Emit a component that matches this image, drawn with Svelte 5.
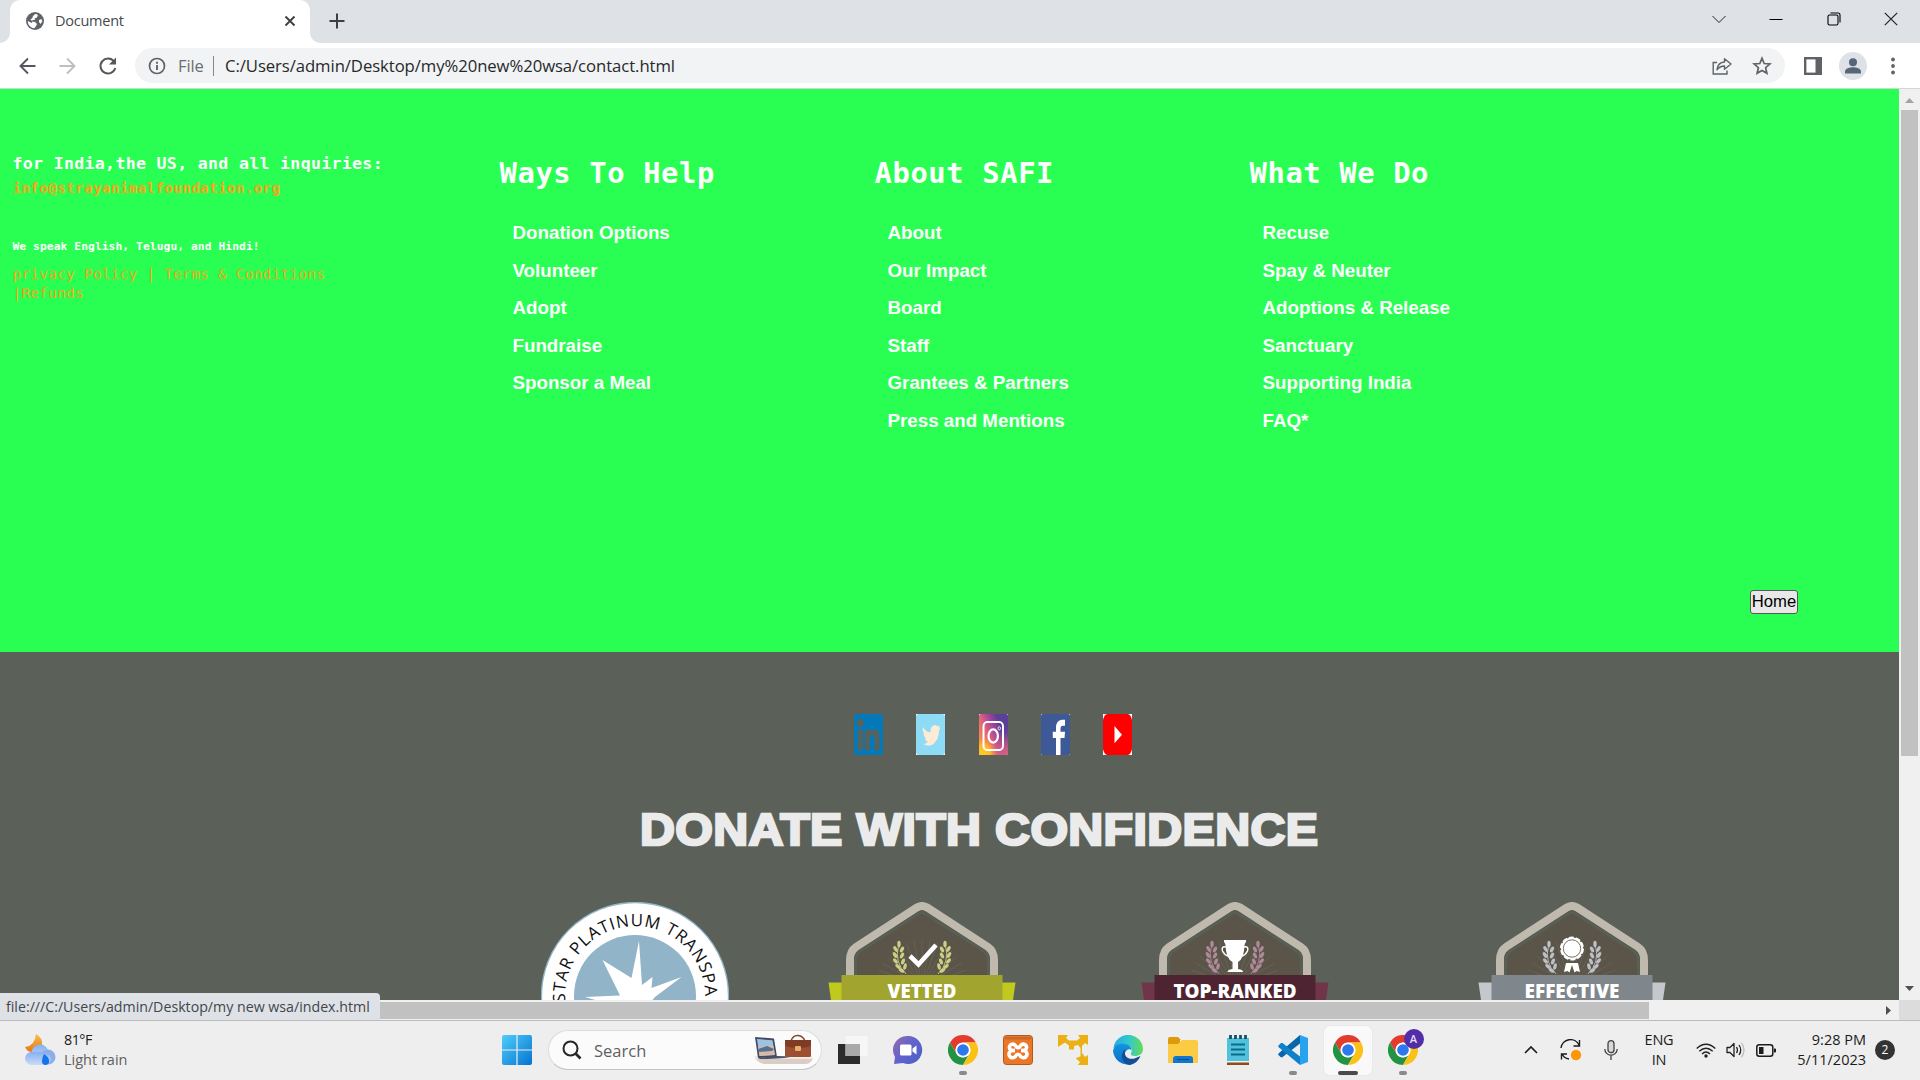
<script>
  const columns = [
    { title: 'Ways To Help', items: ['Donation Options', 'Volunteer', 'Adopt', 'Fundraise', 'Sponsor a Meal'] },
    { title: 'About SAFI', items: ['About', 'Our Impact', 'Board', 'Staff', 'Grantees & Partners', 'Press and Mentions'] },
    { title: 'What We Do', items: ['Recuse', 'Spay & Neuter', 'Adoptions & Release', 'Sanctuary', 'Supporting India', 'FAQ*'] },
  ];

  const badges = [
    { label: 'VETTED', kind: 'check', band: '#a1a42e', tail: '#bfc91e', leaf: '#c9cf83', width: 69 },
    { label: 'TOP-RANKED', kind: 'cup', band: '#4e2432', tail: '#713549', leaf: '#b08a9a', width: 123 },
    { label: 'EFFECTIVE', kind: 'medal', band: '#7f868c', tail: '#c4c7cc', leaf: '#bcc0c6', width: 95 },
  ];

  // Leaves of one laurel branch: centre x, centre y, rotation
  const leaves = [
    [71, 42, 0], [67.5, 47, -30], [74, 47.500, 28], [67, 53, -32], [74, 53.500, 28], [67.5, 59, -38],
    [75, 59.500, 22], [70, 64.500, -48], [77, 64.500, 12], [73.5, 68.500, -58],
  ];
  const rays = Array.from({ length: 17 }, (_, i) => (i + 1) * 10);
</script>

{#snippet chromeLogo()}
  <svg class="icon" viewBox="0 0 30 30">
    <circle cx="15" cy="15" r="15" fill="#fff" />
    <path d="M2 7.500A15 15 0 0 1 28 7.500H15A7.500 7.500 0 0 0 8.500 18.700z" fill="#e33b2e" />
    <path d="M2 7.500A15 15 0 0 0 15 30L21.500 18.750A7.500 7.500 0 0 1 8.500 18.750z" fill="#229342" />
    <path d="M28 7.500A15 15 0 0 1 15 30L21.500 18.750A7.500 7.500 0 0 0 15 7.500z" fill="#fbc116" />
    <circle cx="15" cy="15" r="7.300" fill="#fff" />
    <circle cx="15" cy="15" r="5.800" fill="#2c78ec" />
  </svg>
{/snippet}

{#snippet branch(color)}
  <path d="M70.500 44Q66 60 78 72" fill="none" stroke={color} stroke-width=".9" />
  {#each leaves as [x, y, r]}
    <ellipse cx={x} cy={y} rx="1.700" ry="3.200" fill={color} transform="rotate({r} {x} {y})" />
  {/each}
{/snippet}

<div class="screen">
  <header class="tabstrip">
    <div class="tab">
      <svg class="globe" viewBox="0 0 18 18">
        <circle cx="9" cy="9" r="9" fill="#5f6368" />
        <path d="M9.500 1.800 12 3l-1 2.500-2.500 1L9 8H6.500L6 9.500l3 .5 2 2-1 2-1.500 2.300A7.300 7.300 0 0 1 1.700 9L6 11l.3-2-2-1.500 2-1.300L7 4z" fill="#fff" />
        <path d="M13 8l2.500-1 .8 2.500L14.500 12 13 10z" fill="#fff" />
      </svg>
      <span class="tab-title">Document</span>
      <svg class="tab-close" viewBox="0 0 12 12"><path d="M1.500 1.500l9 9M10.500 1.500l-9 9" stroke="#3c4043" stroke-width="1.900" /></svg>
    </div>
    <svg class="new-tab" viewBox="0 0 16 16"><path d="M8 .5v15M.5 8h15" stroke="#3c4043" stroke-width="2" /></svg>
    <div class="window-controls">
      <svg viewBox="0 0 14 14"><path d="M.5 4 7 10.500 13.500 4" fill="none" stroke="#222" /></svg>
      <svg viewBox="0 0 14 14"><path d="M.5 7.500h13" stroke="#000" stroke-width="1" /></svg>
      <svg viewBox="0 0 14 14"><rect x="1" y="3" width="10" height="10" rx="1.500" fill="none" stroke="#000" stroke-width="1.100" /><path d="M3.500 1H11a2 2 0 0 1 2 2v7.500" fill="none" stroke="#000" stroke-width="1.100" /></svg>
      <svg viewBox="0 0 14 14"><path d="M.8.800l12.400 12.400M13.200.800.800 13.200" stroke="#222" stroke-width="1.200" /></svg>
    </div>
  </header>

  <div class="toolbar">
    <svg class="nav" viewBox="0 0 20 20"><path d="M17.500 10H3M10 2.500 2.500 10l7.500 7.500" fill="none" stroke="#54575b" stroke-width="1.900" /></svg>
    <svg class="nav" viewBox="0 0 20 20"><path d="M1.500 10H16M9 2.500l7.500 7.500L9 17.500" fill="none" stroke="#bdbfc2" stroke-width="1.900" /></svg>
    <svg class="nav" viewBox="0 0 20 20"><path d="M16 5.500A7.500 7.500 0 1 0 17.300 12" fill="none" stroke="#54575b" stroke-width="2" /><path d="M18 1.500v7h-7z" fill="#54575b" /></svg>
    <div class="omnibox">
      <svg class="info" viewBox="0 0 18 18"><circle cx="9" cy="9" r="7.500" fill="none" stroke="#5f6368" stroke-width="1.700" /><path d="M9 8v5M9 4.700v2" stroke="#5f6368" stroke-width="1.900" /></svg>
      <span class="scheme">File</span>
      <i class="divider"></i>
      <span class="url">C:/Users/admin/Desktop/my%20new%20wsa/contact.html</span>
      <svg class="share" viewBox="0 0 20 18"><path d="M5 5.500H1.200V17H15v-3.500" fill="none" stroke="#5f6368" stroke-width="1.400" /><path d="M5 12.800C5.500 8 8 5.300 12.500 5V1.700L19 7l-6.500 5.300V9C9.500 9 7 10 5 12.800z" fill="none" stroke="#5f6368" stroke-width="1.400" stroke-linejoin="round" /></svg>
      <svg class="star" viewBox="0 0 20 20"><path d="M10 2.300l2.200 5.200 5.700.5-4.300 3.700 1.300 5.600L10 14.400l-4.900 2.900 1.300-5.600L2.100 8l5.700-.5z" fill="none" stroke="#5f6368" stroke-width="1.700" /></svg>
    </div>
    <svg class="panel" viewBox="0 0 18 18"><rect x="1.200" y="1.200" width="15.600" height="15.600" fill="#fff" stroke="#5f6368" stroke-width="2.400" /><path d="M11.500 1H17v16h-5.500z" fill="#5f6368" /></svg>
    <svg class="avatar" viewBox="0 0 28 28"><circle cx="14" cy="14" r="14" fill="#dee1e6" /><circle cx="14" cy="10.300" r="4" fill="#56657a" /><path d="M6 21.500v-2c0-3 5-4.200 8-4.200s8 1.200 8 4.200v2z" fill="#56657a" /></svg>
    <svg class="menu" viewBox="0 0 4 18"><circle cx="2" cy="2.500" r="1.900" fill="#5f6368" /><circle cx="2" cy="9" r="1.900" fill="#5f6368" /><circle cx="2" cy="15.500" r="1.900" fill="#5f6368" /></svg>
  </div>

  <div class="viewport">
    <main>
      <section class="links">
        <div class="contact">
          <h3>for India,the US, and all inquiries:</h3>
          <a class="mail">info@strayanimalfoundation.org</a>
          <h5>We speak English, Telugu, and Hindi!</h5>
          <p>privacy Policy | Terms &amp; Conditions<br />|Refunds</p>
        </div>
        {#each columns as column}
          <nav>
            <h1>{column.title}</h1>
            <ul>
              {#each column.items as item}<li>{item}</li>{/each}
            </ul>
          </nav>
        {/each}
        <button>Home</button>
      </section>

      <section class="confidence">
        <div class="social">
          <svg viewBox="0 0 29 41"><path d="M2 0h25q2 0 2 2.500v36q0 2.500-2 2.500H2q-2 0-2-2.500v-36Q0 0 2 0z" fill="#0579b8" /><g fill="#5b6159"><ellipse cx="6.300" cy="9" rx="3.300" ry="4" /><rect x="4" y="15.500" width="5" height="21" rx="2" /><path d="M11 17q0-1.500 2.300-1.500t2.300 2q6-4.500 9 1 .8 2 .8 5V35q0 1.500-2.300 1.500T20.700 35V25q0-4.500-2.500-4.500T15.700 25v10q0 1.500-2.400 1.500T11 35z" /></g></svg>
          <svg viewBox="0 0 29 41"><path fill="#fff" d="M0 0h29v41H0z" /><rect width="29" height="41" rx="3" fill="#8edbf5" /><path d="M7 13q3 5 7.500 5.500-.5-7 4.500-7.500 2 0 3 1.500l2-1-1 2.500 1.200-.3L23 17q0 7-4.500 12T7 30q3.300 0 5-2.500-2.500-.5-3.300-3l1.300-.3q-2.500-1.500-2.700-4.500l1.200.4Q6 17 7 13z" fill="#fdebd5" /></svg>
          <svg viewBox="0 0 29 41">
            <defs>
              <linearGradient id="ig" x1="0" y1=".8" x2="1" y2=".2"><stop offset="0" stop-color="#fd9a35" /><stop offset=".35" stop-color="#e0647c" /><stop offset=".58" stop-color="#a3459a" /><stop offset=".78" stop-color="#5c3f98" /></linearGradient>
              <radialGradient id="ig-warm" cx=".15" cy="1" r=".5"><stop offset="0" stop-color="#ffcf1b" /><stop offset=".5" stop-color="#ffb72a" /><stop offset="1" stop-color="#f0705f" stop-opacity="0" /></radialGradient>
              <radialGradient id="ig-pink" cx="1" cy="1" r=".6"><stop offset="0" stop-color="#e0647c" /><stop offset="1" stop-color="#e0647c" stop-opacity="0" /></radialGradient>
            </defs>
            <path fill="#fff" d="M0 0h29v41H0z" /><rect width="29" height="41" rx="1.500" fill="url(#ig)" /><rect width="29" height="41" fill="url(#ig-pink)" /><rect width="29" height="41" rx="1.500" fill="url(#ig-warm)" />
            <rect x="4.500" y="8" width="19.500" height="28" rx="3.500" ry="4.500" fill="none" stroke="#fff" stroke-width="2" /><ellipse cx="14.200" cy="22" rx="4.700" ry="6.700" fill="none" stroke="#fff" stroke-width="2.200" /><ellipse cx="20.300" cy="14.300" rx="1.200" ry="1.600" fill="none" stroke="#fff" stroke-width=".8" />
          </svg>
          <svg viewBox="0 0 29 41"><path fill="#fff" d="M0 0h29v41H0z" /><rect width="29" height="41" rx="1.500" fill="#3d5998" /><path d="M15 41V24h-3.200v-6.300H15V14q0-8 6-8.300h3v6h-2.300q-2.200 0-2.200 3v3H24l-.5 6.300h-4V41z" fill="#fff" /></svg>
          <svg viewBox="0 0 29 41"><path fill="#fff" d="M0 0h29v41H0z" /><path d="M4 0h21q3 1 4 6v29q-1 5-4 6H4q-3-1-4-6V6Q1 1 4 0z" fill="#f00" /><path d="M11.500 12l7.500 8.700-7.500 8.500z" fill="#fff" /></svg>
        </div>

        <h2><span>DONATE WITH CONFIDENCE</span></h2>

        <div class="badges">
          <svg class="badge seal" viewBox="0 0 188 188">
            <circle cx="94" cy="94" r="93.500" fill="#fff" stroke="#93b5c9" stroke-width="1.300" />
            <circle cx="94" cy="94" r="61" fill="#92b4c8" />
            <path d="M44 95l35-1.500L61.500 58 90.500 76 98 39l3 44 10.500-8-1 11L140.500 75 114 95l-10 12H85z" fill="#fff" />
            <path id="seal-arc" d="M24.300 100.500A70 70 0 1 1 163.900 98" fill="none" />
            <text class="seal-text" textLength="226"><textPath href="#seal-arc" textLength="226">STAR PLATINUM TRANSPA</textPath></text>
          </svg>
          {#each badges as badge}
            <svg class="badge {badge.kind}" viewBox="0 0 188 188">
              <path d="M22 120V58q0-9 6-13L89 5.500q5-3 10 0l61 39.500q6 4 6 13v62" fill="#5a5449" stroke="#bfb9ae" stroke-width="8" />
              <path d="M27.500 120V58.500q0-6 4-9L91 11.500q3-2 6 0L156.500 49.500q4 3 4 9V120" fill="none" stroke="#586056" stroke-width="3" />
              <g stroke="#6b6659" stroke-width=".7">
                {#each rays as angle}<path d="M94 84H48" transform="rotate({angle} 94 84)" />{/each}
              </g>
              {@render branch(badge.leaf)}
              <g transform="translate(188 0) scale(-1 1)">{@render branch(badge.leaf)}</g>
              {#if badge.kind === 'check'}
                <path d="M82 54l8.500 8.500L108 43" fill="none" stroke="#fff" stroke-width="4.600" />
              {:else if badge.kind === 'cup'}
                <path d="M83 38h22v2q-1 1-1.500 3-.5 14-6.500 17v7q5 .5 5 3H86.500q0-2.500 5-3v-7Q85 57 84.500 43q-.5-2-1.500-3z" fill="#fff" />
                <path d="M85 45q-5-1-3.500 4 2 4 5.500 5M103 45q5-1 3.500 4-2 4-5.500 5" fill="none" stroke="#fff" stroke-width="1.500" />
              {:else}
                <path d="M88 61l-2 9 3.500-1 2 1.500L94 63l2.500 7.500 2-1.500 3.500 1-2-9z" fill="#fff" />
                <circle cx="94" cy="46.500" r="11" fill="#fff" stroke="#fff" stroke-width="2" stroke-dasharray="5 1.900" />
                <circle cx="94" cy="46.500" r="8.700" fill="#fff" stroke="#777368" stroke-width="1" />
              {/if}
              <path d="M.5 80.500h14v42H6.500z" fill={badge.tail} /><path d="M187.500 80.500h-14v42h8z" fill={badge.tail} />
              <path d="M13.500 73h161v50h-161z" fill={badge.band} />
              <text class="badge-text" x="94" y="95.500" textLength={badge.width} lengthAdjust="spacingAndGlyphs">{badge.label}</text>
            </svg>
          {/each}
        </div>
      </section>
    </main>
    <div class="vscroll">
      <svg viewBox="0 0 9 5"><path d="M0 5l4.500-5L9 5z" fill="#a3a3a3" /></svg>
      <i></i>
      <svg viewBox="0 0 9 5"><path d="M0 0l4.500 5L9 0z" fill="#505050" /></svg>
    </div>
  </div>

  <div class="hscroll">
    <i></i>
    <svg viewBox="0 0 5 9"><path d="M0 0l5 4.500L0 9z" fill="#505050" /></svg>
    <b></b>
    <span class="status">file:///C:/Users/admin/Desktop/my new wsa/index.html</span>
  </div>

  <footer>
    <div class="weather">
      <svg viewBox="0 0 32 32">
        <defs>
          <linearGradient id="moon" x2="0" y2="1"><stop stop-color="#f8c044" /><stop offset="1" stop-color="#e87618" /></linearGradient>
          <linearGradient id="cloud" x2="0" y2="1"><stop stop-color="#86b0ef" /><stop offset="1" stop-color="#cadcf9" /></linearGradient>
        </defs>
        <path d="M12 0q7 4 6 11-2 7-10 7-5 0-7-5 10-1 11-13z" fill="url(#moon)" />
        <circle cx="16" cy="19" r="8.500" fill="url(#cloud)" /><circle cx="24" cy="23" r="7.500" fill="#8badea" /><rect x="1" y="18" width="26" height="13" rx="6.500" fill="url(#cloud)" />
        <path d="M20 20q7 5 4.500 9.500-3 3-6 0-1.500-4 1.500-9.500z" fill="#1473ec" />
      </svg>
      <div><span>81°F</span><small>Light rain</small></div>
    </div>

    <svg class="windows" viewBox="0 0 30 30">
      <defs><linearGradient id="win" x2="1" y2="1"><stop stop-color="#4fcdfb" /><stop offset="1" stop-color="#0573cf" /></linearGradient></defs>
      <path d="M2 0h12.400v14.400H0V2q0-2 2-2zM15.600 0H28q2 0 2 2v12.400H15.600zM0 15.600h14.400V30H2q-2 0-2-2zM15.600 15.600H30V28q0 2-2 2H15.600z" fill="url(#win)" />
    </svg>

    <div class="search">
      <svg class="glass" viewBox="0 0 20 20"><circle cx="8.500" cy="8.500" r="7" fill="none" stroke="#262626" stroke-width="2" /><path d="M13.500 13.500l5 5" stroke="#262626" stroke-width="2.600" /></svg>
      <span>Search</span>
      <svg class="art" viewBox="0 0 60 32">
        <path d="M1 24h58q-2 6-8 6H12q-7 0-11-6z" fill="#d9cec6" /><path d="M0 22h58v3H2z" fill="#eeeae6" />
        <path d="M1 3l19 1.500L23 23 4 24z" fill="#3f4a66" /><path d="M3 5l15.500 1.300L21 21 5.500 22z" fill="#9fc3de" /><path d="M4 13l15-2 2 10-15.500 1z" fill="#d9b9a6" /><path d="M4 15l9-3 7 3-2 2-13.500 1z" fill="#527291" />
        <path d="M4 24l19-2 15 .5Q30 25 6 25z" fill="#4c5069" />
        <path d="M37 7q2-6 7-5.500T51 7" fill="none" stroke="#874629" stroke-width="1.500" /><rect x="31" y="6" width="26" height="17" rx="1.500" fill="#9c4f33" /><path d="M31 6h26v6q-12 4-26 0z" fill="#7f3b26" /><rect x="41" y="12" width="6" height="5" rx="1" fill="#e8ae68" />
      </svg>
    </div>

    <div class="apps">
      <div class="app"><svg class="icon" viewBox="0 0 30 30"><path d="M0 9h22v20H0z" fill="#2b2b2b" /><path d="M7.500 1h22v20h-22z" fill="#f7f7f7" fill-opacity=".85" /><path d="M7.500 9H22v12H7.500z" fill="#a9a9a9" /></svg></div>
      <div class="app"><svg class="icon" viewBox="0 0 30 30"><defs><linearGradient id="chat" x1="0" x2="1" y2=".8"><stop stop-color="#9a6aa9" /><stop offset=".5" stop-color="#6264cd" /><stop offset="1" stop-color="#4e5fc8" /></linearGradient></defs><path d="M15 1a14 14 0 1 1-5 27L1 29l1-7A14 14 0 0 1 15 1z" fill="url(#chat)" /><rect x="7" y="9.500" width="11.500" height="11" rx="1.500" fill="#fff" /><path d="M19.500 13.500l4-3v9l-4-3z" fill="#fff" /></svg></div>
      <div class="app running">{@render chromeLogo()}</div>
      <div class="app"><svg class="icon" viewBox="0 0 30 30"><rect x=".5" y=".5" width="29" height="29" rx="3" fill="#ec7626" stroke="#b25a1c" /><path d="M2 2h26v2.500H2z" fill="#c96a2b" /><g fill="none" stroke="#fff" stroke-width="3.600"><path d="M12 15.500H9.500A3.200 3.200 0 1 1 12.300 10.500Q15 15 17.700 10.500A3.200 3.200 0 1 1 20.500 15.500H18" /><path d="M12 15.500H9.500A3.600 3.600 0 1 0 12.300 21.500Q15 17 17.700 21.500A3.600 3.600 0 1 0 20.500 15.500H18" /></g></svg></div>
      <div class="app"><svg class="icon" viewBox="0 0 30 30"><path d="M0 0h10L8 3l3 2.500h8L22 3l-2-3h10v10l-3-2-3 3v7l3 4 3-2v10H20l2-3-4-3.500V23l4.500-1.500V13L20 10l-4 1v3.500h-5V10.500l-4-3L3 10l-3 2z" fill="#ebb014" /></svg></div>
      <div class="app"><svg class="icon" viewBox="0 0 30 30"><defs><linearGradient id="edge" x2="1"><stop stop-color="#26a9e5" /><stop offset=".5" stop-color="#32c7d0" /><stop offset="1" stop-color="#65dc55" /></linearGradient><linearGradient id="edge-b" x2="0" y2="1"><stop stop-color="#1594db" /><stop offset="1" stop-color="#0b6cca" /></linearGradient></defs><path d="M.5 13A14.800 14.800 0 0 1 30 14c0 5-4 7-8 7-4 0-5-2-3.500-4 1-4-2-7-6-7C7 10 2 13 .5 13z" fill="url(#edge)" /><path d="M0 16C1 10 6 8 12 9q6 1 6.500 6c-3-2-7 1-6.500 5q1 5 6 6l1 3A15 15 0 0 1 0 16z" fill="url(#edge-b)" /><path d="M12.500 14c-3 8 4 11 9 9.500q4-2 6-2.500A15 15 0 0 1 17 30C9 29 6 19 12.500 14z" fill="#124f97" /></svg></div>
      <div class="app"><svg class="icon" viewBox="0 0 30 30"><path d="M0 4q0-2 2-2h8l3 3h-1v5H0z" fill="#dc9b0b" /><path d="M0 9h10l4-4h14q2 0 2 2v21H0z" fill="#fccb44" /><path d="M5 28v-4q0-3 3-3h14q3 0 3 3v4z" fill="#1275cf" /><path d="M9 24.500h12" stroke="#0a4a8b" /></svg></div>
      <div class="app"><svg class="icon" viewBox="0 0 30 30"><path d="M4 27h22v3H4z" fill="#8f4a17" /><path d="M4 3h22v24H4z" fill="#52c2dc" /><path d="M4 26h22v1.500H4z" fill="#e9f2f4" /><path d="M8 9.500h14M8 14.500h14M8 19.500h14" stroke="#0b6a8a" stroke-width="2" /><path d="M7.500 0v4M12.500 0v4M17.500 0v4M22.500 0v4" stroke="#154f66" stroke-width="2.800" /></svg></div>
      <div class="app running"><svg class="icon" viewBox="0 0 30 30"><path d="M22 0v8.500L4 22.500 2.500 22 0 19.500 1 18z" fill="#0a66ab" /><path d="M0 11l3-3 1.500 0L22 21.500V30L1 12.500z" fill="#0e80cc" /><path d="M22 0l8 3v24l-8 3z" fill="#27a3ef" /></svg></div>
      <div class="app active">{@render chromeLogo()}</div>
      <div class="app running">{@render chromeLogo()}<span class="profile">A</span></div>
    </div>

    <div class="tray">
      <svg class="chevron" viewBox="0 0 14 8"><path d="M1 7l6-6 6 6" fill="none" stroke="#1c1c1c" stroke-width="1.700" /></svg>
      <svg class="sync" viewBox="0 0 22 22"><path d="M1 9A9.500 9.500 0 0 1 19 6M19.500 1v6h-6M9 20A9 9 0 0 1 2 15M1.500 20.500V15H7" fill="none" stroke="#1c1c1c" stroke-width="1.400" /><circle cx="16" cy="16" r="5.200" fill="#fd9709" /></svg>
      <svg class="mic" viewBox="0 0 14 20"><rect x="4" y=".7" width="6" height="12" rx="3" fill="#d8d8d8" stroke="#444" stroke-width="1.300" /><path d="M.8 9a6.200 6.200 0 0 0 12.400 0M7 15v5" fill="none" stroke="#444" stroke-width="1.300" /></svg>
      <span class="lang">ENG<br />IN</span>
      <svg class="wifi" viewBox="0 0 20 15"><path d="M.7 5.500Q10-3 19.300 5.500M3.300 8.300Q10 2 16.700 8.300M6 11q4-3.800 8 0" fill="none" stroke="#222" stroke-width="1.400" /><circle cx="10" cy="13" r="1.700" fill="#222" /></svg>
      <svg class="volume" viewBox="0 0 20 16"><path d="M1 5.500h3l4-4v13l-4-4H1z" fill="none" stroke="#222" stroke-width="1.300" stroke-linejoin="round" /><path d="M10.500 5q2 3 0 6M13 3q3.500 5 0 10" fill="none" stroke="#222" stroke-width="1.300" /><path d="M15.500.8q5 7.200 0 14.400" fill="none" stroke="#bbb" stroke-width="1.300" /></svg>
      <svg class="battery" viewBox="0 0 20 13"><rect x=".8" y=".8" width="16" height="11.400" rx="2.500" fill="none" stroke="#1c1c1c" stroke-width="1.500" /><path d="M3 3h4.500v7H3zM18 4.500h1q1 0 1 1v2q0 1-1 1h-1z" fill="#1c1c1c" /></svg>
      <span class="clock">9:28 PM<br />5/11/2023</span>
      <span class="count">2</span>
    </div>
  </footer>
</div>

<style>
  :global(body) { margin: 0; overflow: hidden; }
  * { box-sizing: border-box; }
  svg { display: block; flex: none; }
  .screen { width: 1920px; height: 1080px; display: flex; flex-direction: column; overflow: hidden; background: #eee; font-family: "Open Sans", "Noto Sans", sans-serif; }

  .tabstrip { height: 43px; flex: none; background: #dee1e6; display: flex; align-items: center; padding-left: 10px; }
  .tab { width: 300px; height: 43px; background: #fff; border-radius: 10px 10px 0 0; display: flex; align-items: center; padding: 0 14px 2px 16px; position: relative; }
  .tab::before, .tab::after { content: ""; position: absolute; bottom: 0; width: 10px; height: 10px; }
  .tab::before { left: -10px; background: radial-gradient(circle at 0 0, transparent 9.5px, #fff 10px); }
  .tab::after { right: -10px; background: radial-gradient(circle at 100% 0, transparent 9.5px, #fff 10px); }
  .globe { width: 18px; height: 18px; }
  .tab-title { font-size: 14.5px; letter-spacing: -.25px; color: #45494d; margin-left: 11px; flex: 1; }
  .tab-close { width: 12px; height: 12px; }
  .new-tab { width: 16px; height: 16px; margin: 0 0 1px 19px; }
  .window-controls { display: flex; gap: 43.3px; margin: 0 22px 6px auto; }
  .window-controls svg { width: 14px; height: 14px; }

  .toolbar { height: 46px; flex: none; background: #fff; border-bottom: 1px solid #d3d5d8; display: flex; align-items: center; padding-left: 18px; }
  .nav { width: 20px; height: 20px; margin-right: 20px; }
  .omnibox { width: 1650px; height: 35px; margin-left: -3px; border-radius: 18px; background: #f1f3f4; display: flex; align-items: center; padding: 0 13px 0 13px; }
  .info { width: 18px; height: 18px; }
  .scheme { font-size: 16.5px; letter-spacing: -.1px; color: #6a6e72; margin-left: 12px; width: 27px; white-space: nowrap; }
  .divider { width: 1px; height: 20px; background: #85888c; margin: 0 11px 0 8px; }
  .url { font-size: 16.7px; letter-spacing: -.07px; color: #27292c; white-space: nowrap; }
  .share { width: 20px; height: 18px; margin-left: auto; }
  .star { width: 20px; height: 20px; margin-left: 20px; }
  .panel { width: 18px; height: 18px; margin-left: 19px; }
  .avatar { width: 28px; height: 28px; margin-left: 17px; }
  .menu { width: 4px; height: 18px; margin-left: 24px; }

  .viewport { height: 911px; flex: none; display: flex; overflow: hidden; }
  main { width: 1899px; flex: none; }
  .links { height: 563px; background: #28ff52; color: #fff; display: grid; grid-template-columns: 487px 375px 375px 1fr; padding-left: 12.5px; position: relative; font-family: "DejaVu Sans Mono", monospace; }
  .links h1, .links h3, .links h5, .links p, .links ul { margin: 0; }
  .contact { padding-top: 64px; white-space: nowrap; }
  .contact h3 { font-size: 16.6px; line-height: 22px; letter-spacing: .3px; }
  .mail { display: block; font-size: 14.2px; font-weight: 700; line-height: 22px; letter-spacing: .39px; color: #f9a51a; margin-top: 2px; }
  .contact h5 { font-size: 11.2px; line-height: 16px; letter-spacing: .13px; margin-top: 40px; }
  .contact p { font-size: 14.2px; line-height: 19px; letter-spacing: .39px; color: #eda91b; margin-top: 10px; }
  nav { padding-top: 65px; }
  nav h1 { font-size: 28.8px; line-height: 38px; letter-spacing: .62px; white-space: nowrap; }
  nav ul { list-style: none; padding: 22px 0 0 13px; font: 700 18.75px/37.5px "Liberation Sans", sans-serif; }
  nav li { height: 37.5px; white-space: nowrap; }
  button { position: absolute; left: 1750px; top: 501px; width: 48px; height: 24px; padding: 0; border: 1.5px solid #555b55; border-radius: 3px; background: #e8e8e8; color: #000; font: 16.67px/20px "Liberation Sans", sans-serif; padding-bottom: 1px; }

  .confidence { height: 348px; background: #5b6159; overflow: hidden; }
  .social { display: flex; gap: 33.4px; padding: 62px 0 0 853.8px; }
  .social svg { width: 29px; height: 41px; }
  h2 { margin: 50px 0 0 640px; width: 680px; height: 50px; font: 700 44.4px/50px "Liberation Sans", sans-serif; color: #ebebeb; white-space: nowrap; }
  h2 span { display: inline-block; letter-spacing: .3px; transform: scaleX(1.09); transform-origin: 0 0; -webkit-text-stroke: 2.4px #ebebeb; }
  .badges { display: flex; padding: 47px 0 0 541px; }
  .badge { width: 188px; height: 188px; }
  .badge.check { margin-left: 99px; }
  .badge.cup { margin-left: 124.5px; }
  .badge.medal { margin-left: 149.500px; }
  .seal-text { font: 17px "Open Sans", sans-serif; fill: #111; }
  .badge-text { font: 800 19.5px "Open Sans", sans-serif; fill: #fff; text-anchor: middle; }

  .vscroll { width: 21px; background: #f0f0f0; display: flex; flex-direction: column; align-items: center; padding: 9px 0 9px; }
  .vscroll svg { width: 9px; height: 5px; }
  .vscroll i { width: 17px; height: 646px; background: #c1c1c1; margin: 7px 0 auto; }
  .hscroll { height: 21px; flex: none; background: #f0f0f0; border-bottom: 1px solid #bcbcbc; display: flex; align-items: center; position: relative; }
  .hscroll i { width: 1649px; height: 17px; background: #c1c1c1; }
  .hscroll svg { width: 5px; height: 9px; margin-left: 237px; }
  .hscroll b { width: 21px; height: 20px; background: #dcdcdc; margin-left: auto; }
  .status { position: absolute; left: 0; bottom: 0; width: 380px; height: 27px; background: #dee1e6; border-top-right-radius: 4px; padding-left: 6px; font-size: 14.2px; line-height: 27px; color: #42464a; white-space: nowrap; }

  footer { height: 59px; flex: none; background: #eee; display: flex; align-items: center; padding: 0 0 1px 24px; }
  .weather { width: 477.500px; display: flex; align-items: center; gap: 8px; }
  .weather svg { width: 32px; height: 32px; }
  .weather div { display: flex; flex-direction: column; font-size: 14.300px; line-height: 20px; color: #202020; }
  .weather span { letter-spacing: -.5px; }
  .weather small { font-size: 14.500px; color: #616161; }
  .windows { width: 30px; height: 30px; }
  .search { width: 274px; height: 40px; margin-left: 16.500px; background: #fbfbfb; border: 1px solid #dcdcdc; border-bottom-color: #c4c4c4; border-radius: 20px; display: flex; align-items: center; padding: 0 7px 0 13px; }
  .glass { width: 20px; height: 20px; }
  .search span { font-size: 16.500px; color: #5f5f5f; margin-left: 12px; }
  .art { width: 60px; height: 32px; margin-left: auto; }
  .apps { display: flex; gap: 7px; margin-left: 6.500px; }
  .app { width: 48px; height: 49px; border-radius: 5px; display: flex; align-items: center; justify-content: center; position: relative; }
  .icon { width: 30px; height: 30px; }
  .active { background: #f9f9f9; box-shadow: 0 0 1px #c8c8c8; }
  .running::after, .active::after { content: ""; position: absolute; bottom: 0; width: 8px; height: 4px; border-radius: 2px; background: #898989; }
  .active::after { width: 20px; background: #4d4a47; }
  .profile { position: absolute; left: 25px; top: 3px; width: 20px; height: 20px; border-radius: 50%; background: #512da8; color: #e3dcf3; font-size: 11px; font-weight: 600; line-height: 20px; text-align: center; }
  .tray { display: flex; align-items: center; margin: 0 25px 0 auto; color: #1c1c1c; font-size: 14.5px; line-height: 20px; }
  .chevron { width: 14px; height: 8px; }
  .sync { width: 22px; height: 22px; margin-left: 22px; }
  .mic { width: 14px; height: 20px; margin-left: 22px; }
  .lang { width: 40px; text-align: center; margin-left: 21px; letter-spacing: -.2px; }
  .wifi { width: 20px; height: 15px; margin-left: 17px; }
  .volume { width: 20px; height: 16px; margin-left: 10px; }
  .battery { width: 20px; height: 13px; margin-left: 10px; }
  .clock { width: 80px; text-align: right; margin-left: 10px; letter-spacing: 0; }
  .count { width: 20px; height: 20px; border-radius: 50%; background: #333; color: #fff; font-size: 12px; line-height: 20px; text-align: center; margin-left: 9px; }
</style>
